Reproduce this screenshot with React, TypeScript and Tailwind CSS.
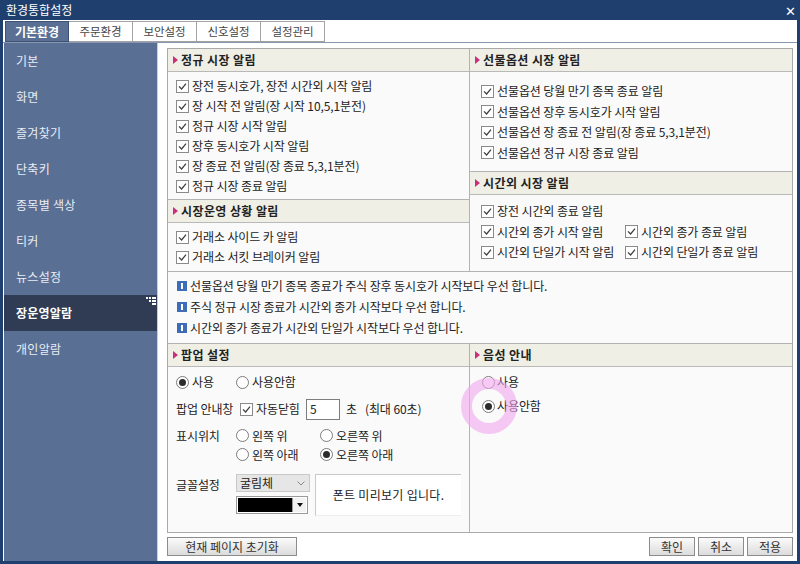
import React from "react";

function Check() {
  return (
    <span className="inline-flex w-[13px] h-[13px] border border-[#8a8a8a] bg-white items-center justify-center shrink-0">
      <svg width="9" height="9" viewBox="0 0 9 9">
        <path d="M1 4.3 L3.6 7 L8 1.6" stroke="#3c3c3c" strokeWidth="1.2" fill="none" />
      </svg>
    </span>
  );
}

function Radio({ on = false }: { on?: boolean }) {
  return (
    <span className="w-[13px] h-[13px] rounded-full border border-[#7b7b7b] bg-white flex items-center justify-center shrink-0">
      {on && <span className="w-[7px] h-[7px] rounded-full bg-[#2b2b2b]" />}
    </span>
  );
}

function Head({ children }: { children: React.ReactNode }) {
  return (
    <div className="h-[23px] shrink-0 bg-[#efefe5] border-b border-[#b9b9b9] flex items-center pl-[5px] gap-[3px] font-bold text-[12px] tracking-[0.4px] text-[#222]">
      <svg width="5" height="8" viewBox="0 0 5 8">
        <path d="M0 0 L5 4 L0 8Z" fill="#c8307c" />
      </svg>
      <span>{children}</span>
    </div>
  );
}

function CRow({ children }: { children: React.ReactNode }) {
  return (
    <div className="h-[20px] flex items-center gap-[3px] whitespace-nowrap">
      <Check />
      <span>{children}</span>
    </div>
  );
}

function Info({ children }: { children: React.ReactNode }) {
  return (
    <div className="h-[21px] flex items-center gap-[3px] whitespace-nowrap">
      <span className="w-[10px] h-[10px] bg-[#3f6cb8] flex items-center justify-center shrink-0">
        <span className="w-[2px] h-[6px] bg-white" />
      </span>
      <span>{children}</span>
    </div>
  );
}

function Btn({ children, w }: { children: React.ReactNode; w: string }) {
  return (
    <div
      className={`${w} h-[19px] border border-[#8c8c8c] bg-gradient-to-b from-[#fbfbfb] to-[#dcdcdc] flex items-center justify-center text-[12px] tracking-[0px] text-[#333]`}
    >
      {children}
    </div>
  );
}

const side = ["기본", "화면", "즐겨찾기", "단축키", "종목별 색상", "티커", "뉴스설정", "장운영알람", "개인알람"];

export default function App() {
  return (
    <div className="w-[800px] h-[564px] bg-[#1f3f6f] flex flex-col [font-family:'Noto_Sans_CJK_KR','Noto_Sans',sans-serif] text-[#222] overflow-hidden">
      {/* Title */}
      <div className="h-[20px] shrink-0 flex items-center justify-between pl-[6px] pr-[4px] text-white">
        <span className="text-[12px] tracking-[0px]">환경통합설정</span>
        <span className="text-[13px] leading-none">✕</span>
      </div>
      {/* Body */}
      <div className="flex-1 ml-[3px] mr-[3px] mb-[3px] bg-white flex flex-col">
        {/* Tabs */}
        <div className="h-[23px] shrink-0 flex items-end pl-[2px] border-b border-[#8797b0]">
          <div className="w-[64px] h-[21px] bg-[#5a6f94] border border-[#3e5073] text-white font-bold text-[12px] tracking-[0px] flex items-center justify-center">
            기본환경
          </div>
          {["주문환경", "보안설정", "신호설정", "설정관리"].map((t) => (
            <div
              key={t}
              className="w-[64px] h-[21px] bg-white border border-l-0 border-[#a3a3a3] text-[#444] text-[11.5px] tracking-[-0.1px] flex items-center justify-center"
            >
              {t}
            </div>
          ))}
        </div>
        <div className="flex-1 flex">
          {/* Sidebar */}
          <div className="w-[154px] shrink-0 ml-[1px] bg-[#5a6f94] border-r border-[#c7cfdc] flex flex-col">
            {side.map((s) =>
              s === "장운영알람" ? (
                <div key={s} className="relative h-[36px] bg-[#2f3c53] flex items-center pl-[12px] text-white font-bold text-[12px] tracking-[0.2px]">
                  {s}
                  <svg className="absolute right-[1px] top-[2px]" width="10" height="9" viewBox="0 0 10 9">
                    <g fill="#ffffff">
                      <rect x="0" y="0" width="2" height="2" />
                      <rect x="3" y="0" width="2" height="2" />
                      <rect x="6" y="0" width="2" height="2" />
                      <rect x="8" y="0" width="2" height="2" />
                      <rect x="3" y="3" width="2" height="2" />
                      <rect x="6" y="3" width="2" height="2" />
                      <rect x="8" y="3" width="2" height="2" />
                      <rect x="6" y="6" width="2" height="2" />
                      <rect x="8" y="6" width="2" height="2" />
                    </g>
                  </svg>
                </div>
              ) : (
                <div key={s} className="h-[36px] flex items-center pl-[12px] text-[#e8edf4] text-[12px] tracking-[0.3px]">
                  {s}
                </div>
              )
            )}
          </div>
          {/* Content */}
          <div className="flex-1 pl-[9px] pr-[4px] pt-[5px] flex flex-col text-[12px] tracking-[-0.1px]">
            <div className="h-[485px] border border-[#a9a9a9] bg-[#fafafa] flex flex-col">
              {/* Top block */}
              <div className="h-[223px] flex border-b border-[#b3b3b3]">
                <div className="w-[302px] border-r border-[#b3b3b3] flex flex-col">
                  <div className="h-[151px] border-b border-[#b3b3b3] flex flex-col">
                    <Head>정규 시장 알림</Head>
                    <div className="pl-[8px] pt-[4px]">
                      <CRow>장전 동시호가, 장전 시간외 시작 알림</CRow>
                      <CRow>장 시작 전 알림(장 시작 10,5,1분전)</CRow>
                      <CRow>정규 시장 시작 알림</CRow>
                      <CRow>장후 동시호가 시작 알림</CRow>
                      <CRow>장 종료 전 알림(장 종료 5,3,1분전)</CRow>
                      <CRow>정규 시장 종료 알림</CRow>
                    </div>
                  </div>
                  <div className="flex-1 flex flex-col">
                    <Head>시장운영 상황 알림</Head>
                    <div className="pl-[8px] pt-[4px]">
                      <CRow>거래소 사이드 카 알림</CRow>
                      <CRow>거래소 서킷 브레이커 알림</CRow>
                    </div>
                  </div>
                </div>
                <div className="flex-1 flex flex-col">
                  <div className="h-[123px] border-b border-[#b3b3b3] flex flex-col">
                    <Head>선물옵션 시장 알림</Head>
                    <div className="pl-[11px] pt-[9px] flex flex-col gap-[0.5px]">
                      <CRow>선물옵션 당월 만기 종목 종료 알림</CRow>
                      <CRow>선물옵션 장후 동시호가 시작 알림</CRow>
                      <CRow>선물옵션 장 종료 전 알림(장 종료 5,3,1분전)</CRow>
                      <CRow>선물옵션 정규 시장 종료 알림</CRow>
                    </div>
                  </div>
                  <div className="flex-1 flex flex-col">
                    <Head>시간외 시장 알림</Head>
                    <div className="pl-[11px] pt-[6px] grid grid-cols-[144px_1fr] gap-y-[0.5px]">
                      <CRow>장전 시간외 종료 알림</CRow>
                      <div />
                      <CRow>시간외 종가 시작 알림</CRow>
                      <CRow>시간외 종가 종료 알림</CRow>
                      <CRow>시간외 단일가 시작 알림</CRow>
                      <CRow>시간외 단일가 종료 알림</CRow>
                    </div>
                  </div>
                </div>
              </div>
              {/* Info */}
              <div className="h-[72px] border-b border-[#b3b3b3] pl-[9px] pt-[3px]">
                <Info>선물옵션 당월 만기 종목 종료가 주식 장후 동시호가 시작보다 우선 합니다.</Info>
                <Info>주식 정규 시장 종료가 시간외 종가 시작보다 우선 합니다.</Info>
                <Info>시간외 종가 종료가 시간외 단일가 시작보다 우선 합니다.</Info>
              </div>
              {/* Bottom block */}
              <div className="flex-1 flex">
                <div className="w-[302px] border-r border-[#b3b3b3] flex flex-col">
                  <Head>팝업 설정</Head>
                  <div className="pl-[8px] pt-[5px] flex flex-col">
                    <div className="h-[20px] flex items-center">
                      <div className="w-[60px] flex items-center gap-[3px]">
                        <Radio on />
                        <span>사용</span>
                      </div>
                      <div className="flex items-center gap-[3px]">
                        <Radio />
                        <span>사용안함</span>
                      </div>
                    </div>
                    <div className="h-[22px] mt-[6px] flex items-center whitespace-nowrap">
                      <span className="w-[64px]">팝업 안내창</span>
                      <Check />
                      <span className="ml-[3px] w-[50px]">자동닫힘</span>
                      <div className="w-[34px] h-[21px] border border-[#7d7d7d] bg-white flex items-center pl-[3px]">5</div>
                      <span className="ml-[6px]">초</span>
                      <span className="ml-[8px]">(최대 60초)</span>
                    </div>
                    <div className="h-[19px] mt-[6px] flex items-center">
                      <span className="w-[60px]">표시위치</span>
                      <div className="w-[84px] flex items-center gap-[3px]">
                        <Radio />
                        <span>왼쪽 위</span>
                      </div>
                      <div className="flex items-center gap-[3px]">
                        <Radio />
                        <span>오른쪽 위</span>
                      </div>
                    </div>
                    <div className="h-[19px] flex items-center">
                      <span className="w-[60px]" />
                      <div className="w-[84px] flex items-center gap-[3px]">
                        <Radio />
                        <span>왼쪽 아래</span>
                      </div>
                      <div className="flex items-center gap-[3px]">
                        <Radio on />
                        <span>오른쪽 아래</span>
                      </div>
                    </div>
                    <div className="mt-[10px] flex">
                      <span className="w-[60px] pt-[2px]">글꼴설정</span>
                      <div className="flex flex-col gap-[4px]">
                        <div className="w-[74px] h-[18px] bg-[#e6e6e6] border border-[#c9c9c9] flex items-center justify-between pl-[3px] pr-[4px]">
                          <span>굴림체</span>
                          <svg width="8" height="5" viewBox="0 0 8 5">
                            <path d="M0.5 0.5 L4 4 L7.5 0.5" stroke="#8a8a8a" fill="none" />
                          </svg>
                        </div>
                        <div className="w-[72px] h-[18px] border border-[#9a9a9a] bg-white flex p-[1px]">
                          <div className="flex-1 bg-black" />
                          <div className="w-[14px] bg-[#f2f2f2] border-l border-[#9a9a9a] flex items-center justify-center">
                            <svg width="6" height="4" viewBox="0 0 6 4">
                              <path d="M0 0 L6 0 L3 4Z" fill="#111" />
                            </svg>
                          </div>
                        </div>
                      </div>
                      <div className="ml-[5px] w-[146px] h-[42px] border-t border-l border-[#c9c9c9] border-b border-b-[#eeeeee] bg-white flex items-center justify-center text-[12px] tracking-[0.3px]">
                        폰트 미리보기 입니다.
                      </div>
                    </div>
                  </div>
                </div>
                <div className="flex-1 flex flex-col relative">
                  <Head>음성 안내</Head>
                  <div className="pl-[12px] pt-[5px] flex flex-col gap-[4px]">
                    <div className="h-[20px] flex items-center gap-[2px]">
                      <Radio />
                      <span>사용</span>
                    </div>
                    <div className="h-[20px] flex items-center gap-[2px]">
                      <Radio on />
                      <span>사용안함</span>
                    </div>
                  </div>
                  <div className="absolute left-[-9px] top-[34px] w-[56px] h-[56px] rounded-full border-[11px] border-[#f2a6ee] opacity-60 pointer-events-none" />
                </div>
              </div>
            </div>
            {/* Buttons */}
            <div className="mt-[4px] flex items-center justify-between">
              <Btn w="w-[130px]">현재 페이지 초기화</Btn>
              <div className="flex gap-[3px]">
                <Btn w="w-[46px]">확인</Btn>
                <Btn w="w-[46px]">취소</Btn>
                <Btn w="w-[46px]">적용</Btn>
              </div>
            </div>
          </div>
        </div>
      </div>
    </div>
  );
}
